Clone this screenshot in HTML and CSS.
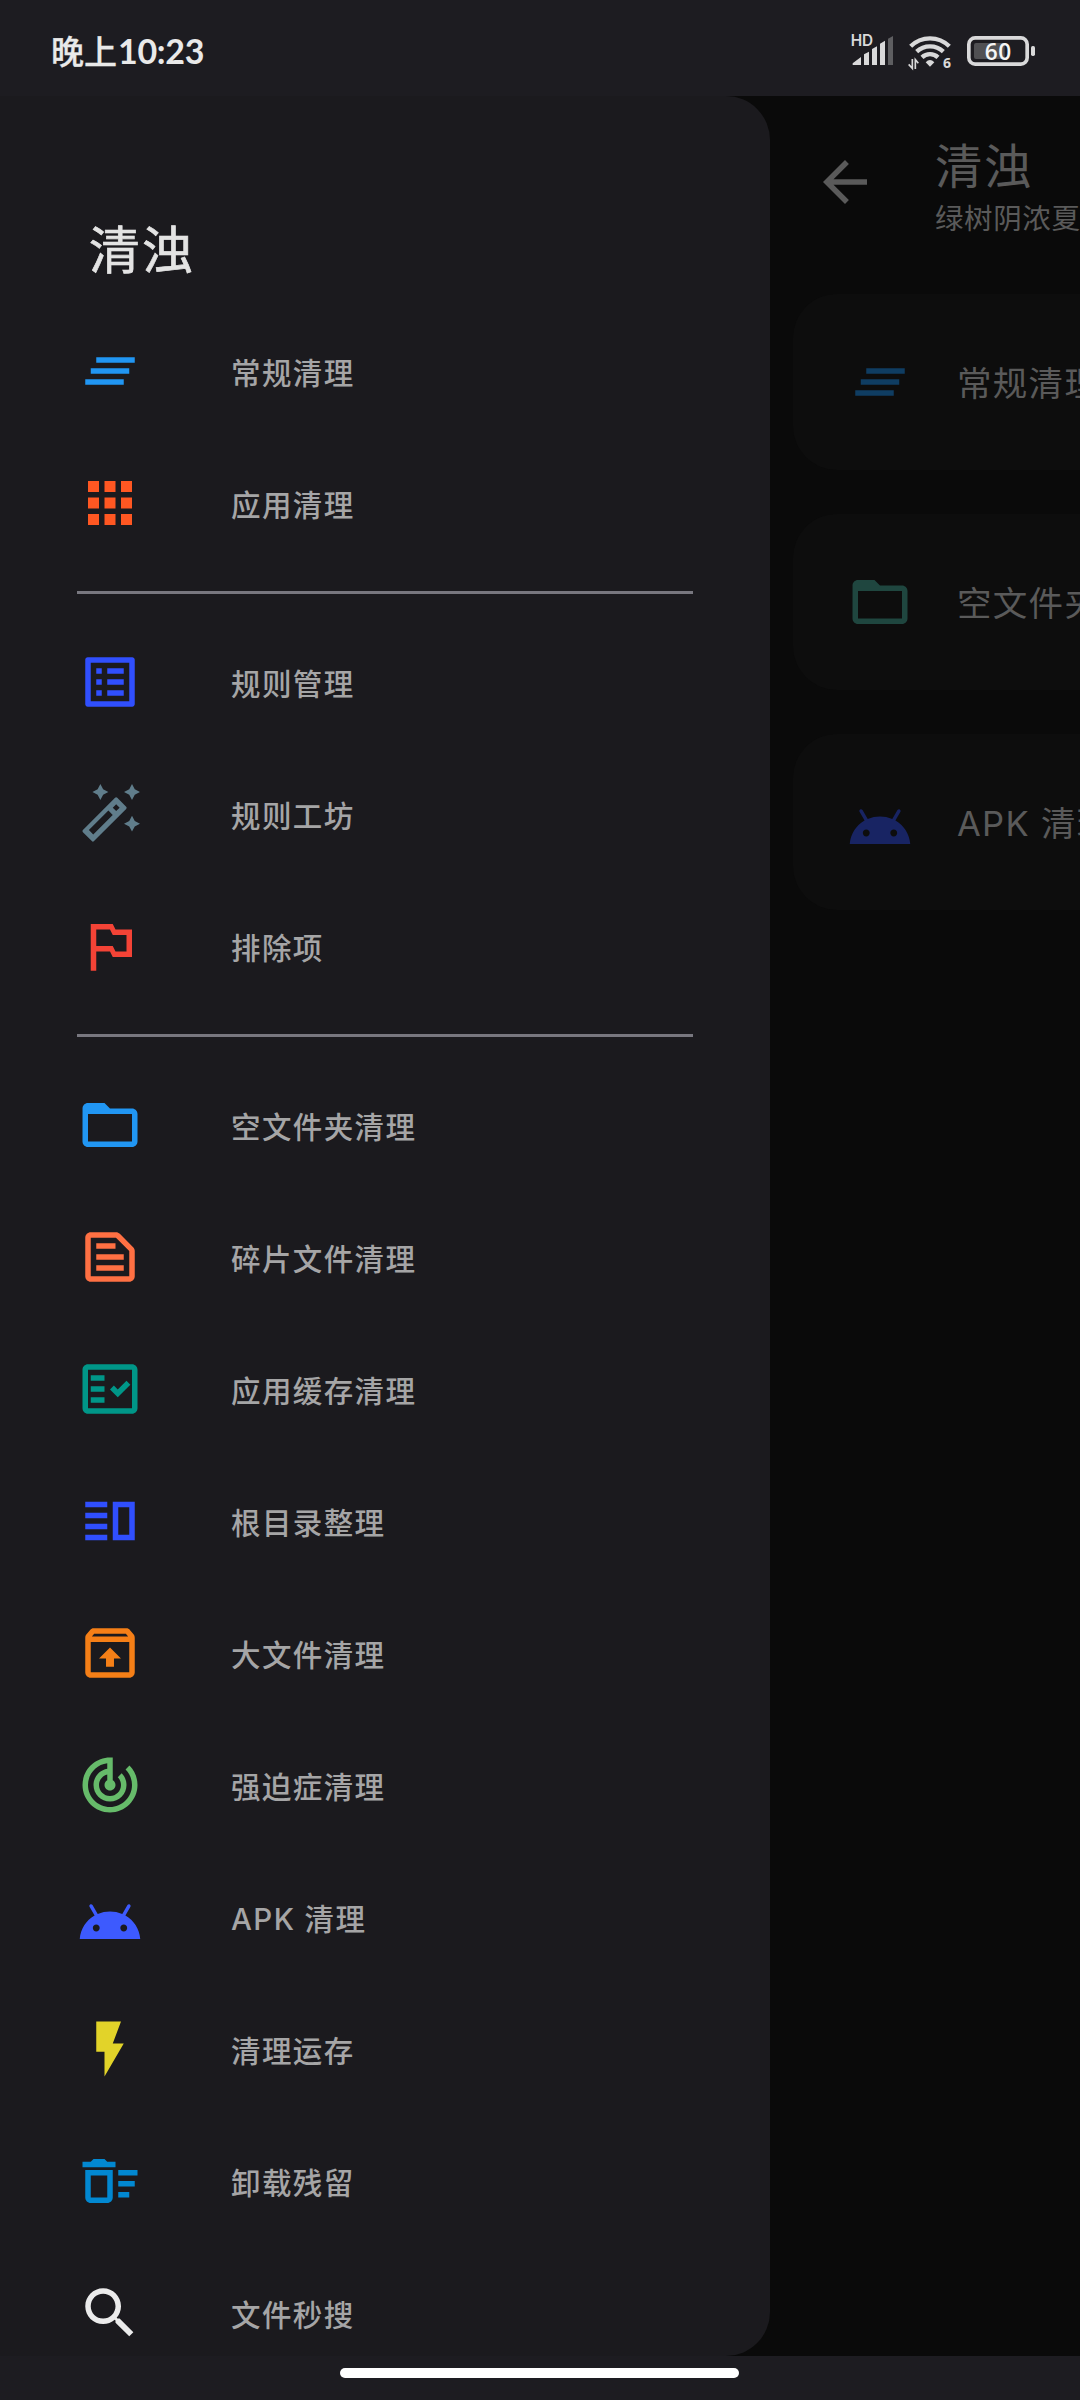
FILE: index.html
```html
<!DOCTYPE html>
<html lang="zh-CN">
<head>
<meta charset="utf-8">
<title>清浊</title>
<link rel="stylesheet" href="styles.css">
</head>
<body>
<svg class="sprite" aria-hidden="true">
  <symbol id="clear" viewBox="0 0 24 24"><path d="M5 13h14v-2H5v2zm-2 4h14v-2H3v2zM7 7v2h14V7H7z"/></symbol>
  <symbol id="folder" viewBox="0 0 24 24"><path d="M20 6h-8l-2-2H4c-1.1 0-1.99.9-1.99 2L2 18c0 1.1.9 2 2 2h16c1.1 0 2-.9 2-2V8c0-1.1-.9-2-2-2zm0 12H4V8h16v10z"/></symbol>
  <symbol id="android" viewBox="0 0 24 24"><path transform="translate(0 2)" d="M17.6 9.48l1.84-3.18c.16-.31.04-.69-.26-.85-.29-.15-.65-.06-.83.22l-1.88 3.24c-2.86-1.21-6.08-1.21-8.94 0L5.65 5.67c-.19-.29-.58-.38-.87-.2-.28.18-.37.54-.22.83L6.4 9.48C3.3 11.25 1.28 14.44 1 18h22c-.28-3.56-2.3-6.75-5.4-8.52zM7 15.25c-.69 0-1.25-.56-1.25-1.25S6.31 12.75 7 12.75s1.25.56 1.25 1.25S7.69 15.25 7 15.25zm10 0c-.69 0-1.25-.56-1.25-1.25s.56-1.25 1.25-1.25 1.25.56 1.25 1.25-.56 1.25-1.25 1.25z"/></symbol>
</svg>

<header class="status">
  <div class="clock">晚上<span class="digits">10:23</span></div>
  <div class="indicators">
    <svg width="43" height="33" viewBox="93 99 129 99">
      <text class="hd" x="92" y="138">HD</text>
      <path d="M98 195v-5l25-19v24zM132 195v-32l15-8v40zM156 195v-48l15-8v56zM180 195v-64l15-9v73z"/>
      <path class="faint" d="M204 195v-79l15-8v87z"/>
    </svg>
    <svg width="44" height="37" viewBox="264 99 132 111">
      <g class="arcs"><path d="M272 139A82 82 0 0 1 388 139"/><path d="M290 155A58 58 0 0 1 370 155"/><path d="M306 172A35 35 0 0 1 354 172"/></g>
      <path d="M317 187Q330 173 343 187L330 200z"/>
      <path class="arrows" d="M277 177v28L266 193M286 207v-28L295 190"/>
      <text class="gen" x="369" y="205">6</text>
    </svg>
    <svg class="battery" width="70" height="32" viewBox="438 105 210 96">
      <rect class="level" x="462" y="129" width="92" height="48" rx="6"/>
      <rect class="shell" x="446.500" y="113.500" width="175" height="79" rx="19"/>
      <rect x="633" y="138" width="12" height="30" rx="5"/>
      <text class="percent" x="534" y="180" text-anchor="middle" textLength="80">60</text>
    </svg>
  </div>
</header>

<main class="screen">
  <nav class="drawer">
    <h1 class="drawer-title">清浊</h1>
    <ul class="group">
      <li class="item"><svg class="icon blue"><use href="#clear"/></svg>常规清理</li>
      <li class="item"><svg class="icon orange" viewBox="0 0 24 24"><path d="M4 8h4V4H4v4zm6 12h4v-4h-4v4zm-6 0h4v-4H4v4zm0-6h4v-4H4v4zm6 0h4v-4h-4v4zm6-10v4h4V4h-4zm-6 4h4V4h-4v4zm6 6h4v-4h-4v4zm0 6h4v-4h-4v4z"/></svg>应用清理</li>
    </ul>
    <ul class="group">
      <li class="item"><svg class="icon indigo" viewBox="0 0 24 24"><path d="M19 5v14H5V5h14m1.100-2H3.900c-.5 0-.9.4-.9.9v16.200c0 .4.4.9.9.9h16.200c.4 0 .9-.5.9-.9V3.900c0-.5-.5-.9-.9-.9zM11 7h6v2h-6V7zm0 4h6v2h-6v-2zm0 4h6v2h-6zM7 7h2v2H7zm0 4h2v2H7zm0 4h2v2H7z"/></svg>规则管理</li>
      <li class="item"><svg class="icon slate" viewBox="0 0 24 24"><path fill-rule="evenodd" d="M8.500 1.100l1 1.900 1.900 1-1.900 1-1 1.900-1-1.900-1.900-1 1.900-1zM20 1.100l1 1.900 1.900 1-1.900 1-1 1.900-1-1.900-1.900-1 1.900-1zM20 12.600l1 1.900 1.900 1-1.900 1-1 1.900-1-1.900-1.900-1 1.900-1zM13.840 6.120L2.150 17.810q-.4.400 0 .8l3.240 3.240q.4.400.8 0L17.880 10.160q.4-.400 0-.8l-3.240-3.240q-.4-.4-.8 0zM11.420 10.750l1.580 1.580-7.100 7.100-1.580-1.580zM14.250 8.450l1.250 1.250-1.250 1.250L13 9.700z"/></svg>规则工坊</li>
      <li class="item"><svg class="icon red" viewBox="0 0 24 24"><path d="M14 6l-1-2H5v17h2v-7h5l1 2h7V6h-6zm4 8h-4l-1-2H7V6h5l1 2h5v6z"/></svg>排除项</li>
    </ul>
    <ul class="group">
      <li class="item"><svg class="icon blue"><use href="#folder"/></svg>空文件夹清理</li>
      <li class="item"><svg class="icon coral" viewBox="0 0 24 24"><path d="M14.170 5L19 9.830V19H5V5h9.170m0-2H5c-1.100 0-2 .9-2 2v14c0 1.100.9 2 2 2h14c1.100 0 2-.9 2-2V9.830c0-.53-.21-1.040-.59-1.410l-4.830-4.830c-.37-.38-.88-.59-1.410-.59zM7 15h10v2H7v-2zm0-4h10v2H7v-2zm0-4h7v2H7V7z"/></svg>碎片文件清理</li>
      <li class="item"><svg class="icon teal" viewBox="0 0 24 24"><path d="M20 3H4c-1.100 0-2 .9-2 2v14c0 1.100.9 2 2 2h16c1.100 0 2-.9 2-2V5c0-1.100-.9-2-2-2zm0 16H4V5h16v14zM19.410 10.420L17.990 9l-3.170 3.170-1.410-1.420L12 12.160 14.820 15zM10 7H5v2h5V7zm0 4H5v2h5v-2zm0 4H5v2h5v-2z"/></svg>应用缓存清理</li>
      <li class="item"><svg class="icon indigo" viewBox="0 0 24 24"><path fill-rule="evenodd" d="M3 15h8v-2H3v2zm0 4h8v-2H3v2zm0-8h8V9H3v2zm0-6v2h8V5H3zM13 5h8v14h-8V5zM15 7v10h4V7z"/></svg>根目录整理</li>
      <li class="item"><svg class="icon amber" viewBox="0 0 24 24"><path d="M20.550 5.220l-1.390-1.680C18.880 3.210 18.470 3 18 3H6c-.47 0-.88.21-1.150.55L3.460 5.220C3.170 5.570 3 6.010 3 6.500V19c0 1.100.89 2 2 2h14c1.100 0 2-.9 2-2V6.500c0-.49-.17-.93-.45-1.280zM6.240 5h11.520l.83 1H5.420l.82-1zM5 19V8h14v11H5zM8 14h2.550v3h2.900v-3H16l-4-4-4 4z"/></svg>大文件清理</li>
      <li class="item"><svg class="icon green" viewBox="0 0 24 24"><path d="M19.070 4.930l-1.410 1.410C19.100 7.790 20 9.790 20 12c0 4.420-3.580 8-8 8s-8-3.580-8-8c0-4.080 3.050-7.440 7-7.930v2.020C8.160 6.570 6 9.030 6 12c0 3.310 2.690 6 6 6s6-2.690 6-6c0-1.660-.67-3.160-1.760-4.240l-1.410 1.410C15.550 9.900 16 10.900 16 12c0 2.210-1.790 4-4 4s-4-1.790-4-4c0-1.860 1.280-3.410 3-3.860v2.140c-.6.35-1 .98-1 1.720 0 1.100.9 2 2 2s2-.9 2-2c0-.74-.4-1.380-1-1.720V2h-1C6.480 2 2 6.480 2 12s4.480 10 10 10 10-4.480 10-10c0-2.760-1.120-5.260-2.930-7.070z"/></svg>强迫症清理</li>
      <li class="item"><svg class="icon violet"><use href="#android"/></svg>APK 清理</li>
      <li class="item"><svg class="icon yellow" viewBox="0 0 24 24"><path d="M7 2v11h3v9l7-12h-4l3-8z"/></svg>清理运存</li>
      <li class="item"><svg class="icon azure" viewBox="0 0 24 24"><path d="M15 16h4v2h-4zm0-8h7v2h-7zm0 4h6v2h-6zM3 18c0 1.100.9 2 2 2h6c1.100 0 2-.9 2-2V8H3v10zm2-8h6v8H5v-8zm5-6H6L5 5H2v2h12V5h-3z"/></svg>卸载残留</li>
      <li class="item"><svg class="icon white" viewBox="0 0 24 24"><path d="M15.500 14h-.79l-.28-.27C15.410 12.590 16 11.110 16 9.500 16 5.910 13.090 3 9.500 3S3 5.910 3 9.500 5.910 16 9.500 16c1.610 0 3.090-.59 4.230-1.570l.27.28v.79l5 4.990L20.490 19l-4.990-5zm-6 0C7.010 14 5 11.990 5 9.500S7.010 5 9.500 5 14 7.010 14 9.500 11.990 14 9.500 14z"/></svg>文件秒搜</li>
    </ul>
  </nav>

  <section class="page">
    <div class="toolbar">
      <svg class="icon back" viewBox="0 0 24 24"><path d="M20 11H7.830l5.590-5.590L12 4l-8 8 8 8 1.410-1.410L7.830 13H20v-2z"/></svg>
      <div class="heading">
        <h2 class="page-title">清浊</h2>
        <p class="subtitle">绿树阴浓夏</p>
      </div>
    </div>
    <div class="cards">
      <div class="card"><svg class="icon dim-blue"><use href="#clear"/></svg><span>常规清理</span></div>
      <div class="card"><svg class="icon dim-teal"><use href="#folder"/></svg><span>空文件夹</span></div>
      <div class="card"><svg class="icon dim-indigo"><use href="#android"/></svg><span>APK 清理</span></div>
    </div>
  </section>
</main>

<footer class="gesture"><div class="pill"></div></footer>
</body>
</html>
```
FILE: styles.css
```css
* { box-sizing: border-box; margin: 0; padding: 0; }

body {
  width: 1080px;
  height: 2400px;
  overflow: hidden;
  display: flex;
  flex-direction: column;
  background: #0a0a0a;
  font-family: "Noto Sans CJK SC", sans-serif;
  white-space: nowrap;
}

.sprite { display: none; }

/* Status bar */
.status {
  height: 96px;
  flex: none;
  display: flex;
  justify-content: space-between;
  padding: 0 44px 0 51px;
  background: #1d1c21;
  color: #e9e9e9;
}
.clock {
  display: flex;
  font-size: 33px;
  font-weight: 500;
  line-height: 101px;
  -webkit-text-stroke: 0.3px currentColor;
}
.digits {
  font-family: Lato, "Noto Sans CJK SC", sans-serif;
  font-size: 34px;
  font-weight: 700;
  letter-spacing: -0.3px;
  margin-left: 1px;
  -webkit-text-stroke: 0;
}
.indicators {
  display: flex;
  align-items: flex-start;
  gap: 14px;
  padding-top: 33px;
  fill: #d9d9da;
}
.indicators svg { overflow: visible; }
.indicators text { font-family: "Open Sans", sans-serif; }
.battery { margin-top: 2px; }
.indicators .hd { font-family: Inter, sans-serif; font-size: 46px; font-weight: 600; }
.faint { fill: #5e5e61; }
.arcs { fill: none; stroke: #d9d9da; stroke-width: 13; }
.arrows { fill: none; stroke: #d9d9da; stroke-width: 5; }
.gen { font-size: 42px; font-weight: 700; }
.level { fill: #505053; }
.shell { fill: none; stroke: #d9d9da; stroke-width: 11; }
.percent { font-size: 68px; font-weight: 600; fill: #f5f5f5; }

/* Main area */
.screen {
  height: 2260px;
  flex: none;
  display: flex;
  overflow: hidden;
}
.icon { width: 66px; height: 66px; flex: none; fill: currentColor; }

/* Navigation drawer */
.drawer {
  width: 770px;
  flex: none;
  overflow: hidden;
  background: #1b1a1e;
  border-radius: 0 44px 44px 0;
}
.drawer-title {
  height: 209px;
  padding: 115px 0 0 89px;
  font-size: 51px;
  font-weight: 400;
  line-height: 72px;
  letter-spacing: 2px;
  color: #e3e3e3;
  -webkit-text-stroke: 0.7px currentColor;
}
.group { list-style: none; }
.group + .group::before {
  content: "";
  display: block;
  height: 3px;
  margin: 22px 77px;
  background: #78777f;
}
.item {
  height: 132px;
  display: flex;
  align-items: center;
  gap: 88px;
  padding-left: 77px;
  font-family: Inter, "Noto Sans CJK SC", sans-serif;
  font-size: 29.500px;
  font-weight: 500;
  letter-spacing: 1.400px;
  color: #a5a5a6;
}

/* Dimmed page behind the drawer */
.page { width: 310px; flex: none; overflow: hidden; color: #5a5a5a; }
.toolbar { height: 198px; display: flex; gap: 57px; padding: 0 0 0 42px; }
.back { margin-top: 53px; }
.heading { padding-top: 34px; }
.page-title { font-size: 47.500px; font-weight: 400; line-height: 68px; letter-spacing: 1.500px; }
.subtitle { font-size: 28.500px; line-height: 38px; letter-spacing: 0.600px; }
.cards { display: flex; flex-direction: column; gap: 44px; margin-left: 23px; }
.card {
  height: 176px;
  display: flex;
  align-items: center;
  gap: 44px;
  padding-left: 54px;
  border-radius: 44px 0 0 44px;
  background: #0d0d0d;
  font-family: Inter, "Noto Sans CJK SC", sans-serif;
  font-size: 34.500px;
  letter-spacing: 1.300px;
}
.card span { padding-bottom: 2px; }

/* Icon colours */
.blue { color: #2196f3; }
.orange { color: #ff5722; }
.indigo { color: #304ffe; }
.slate { color: #607d8b; }
.red { color: #f44336; }
.coral { color: #ff7043; }
.teal { color: #009688; }
.amber { color: #f57f17; }
.green { color: #66bb6a; }
.violet { color: #3d5afe; }
.yellow { color: #e2d329; }
.azure { color: #0288d1; }
.white { color: #ebebeb; }
.dim-blue { color: #0f3d62; }
.dim-teal { color: #1f463f; }
.dim-indigo { color: #182463; }

/* Gesture bar */
.gesture {
  height: 44px;
  flex: none;
  display: flex;
  justify-content: center;
  padding: 12px 2px 0 0;
  background: #1d1c21;
}
.pill { width: 399px; height: 10px; border-radius: 5px; background: #fff; }
```
